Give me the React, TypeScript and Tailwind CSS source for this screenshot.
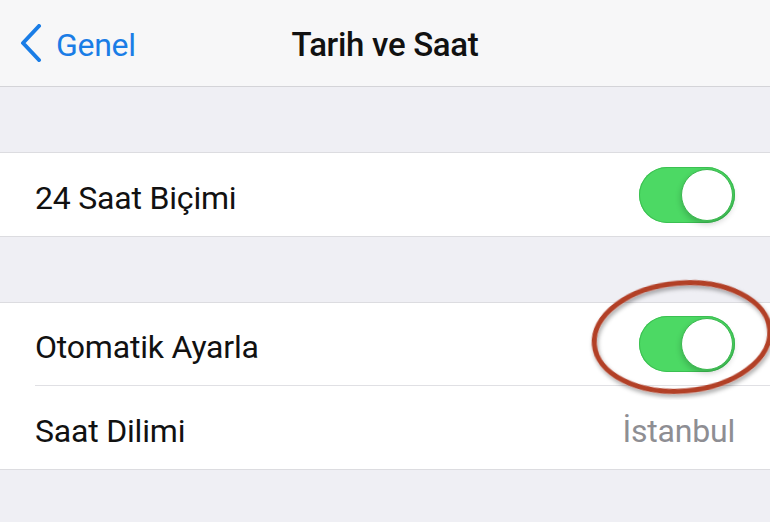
import React from 'react'

function Toggle() {
  return (
    <div className="flex h-[56px] w-[96px] items-center justify-end rounded-full bg-[#4cd964] p-[2px] shadow-[inset_0_0_0_1px_#3cc052]">
      <div className="h-[52px] w-[52px] rounded-full border border-[#3bb84f] bg-white shadow-[0_3px_6px_rgba(0,0,0,0.2)]" />
    </div>
  )
}

function Row({ label, right, divider }: { label: string; right: React.ReactNode; divider?: boolean }) {
  return (
    <div className="bg-white pl-[35px]">
      <div className={`flex h-[83px] items-center justify-between pr-[35px] ${divider ? 'border-b border-[#e0e0e4]' : ''}`}>
        <span className="pt-[6px] text-[32px] tracking-[-0.2px] text-[#111]">{label}</span>
        {right}
      </div>
    </div>
  )
}

export default function App() {
  return (
    <div className="relative h-[522px] w-[770px] overflow-hidden bg-[#efeff4] font-['Roboto',sans-serif]">
      {/* nav bar */}
      <div className="relative flex h-[87px] items-center justify-center border-b border-[#d4d4d8] bg-[#f7f7f8]">
        <div className="absolute left-[20px] flex items-center gap-[14px] text-[#1a7de6]">
          <svg width="22" height="38" viewBox="0 0 22 38">
            <path d="M19 2 L3 19 L19 36" fill="none" stroke="currentColor" strokeWidth="4" strokeLinecap="round" strokeLinejoin="round" />
          </svg>
          <span className="pt-[3px] text-[32px] tracking-[-0.3px]">Genel</span>
        </div>
        <span className="pt-[4px] text-[33px] font-medium tracking-[-0.3px] text-[#111]">Tarih ve Saat</span>
      </div>

      <div className="h-[65px]" />
      <div className="border-y border-[#dcdce0]">
        <Row label="24 Saat Biçimi" right={<Toggle />} />
      </div>

      <div className="h-[65px]" />
      <div className="border-y border-[#dcdce0]">
        <Row label="Otomatik Ayarla" right={<Toggle />} divider />
        <Row label="Saat Dilimi" right={<span className="pt-[6px] text-[32px] tracking-[-0.2px] text-[#8e8e93]">İstanbul</span>} />
      </div>

      {/* red annotation ellipse */}
      <svg className="absolute left-[585px] top-[275px]" width="190" height="125" viewBox="0 0 190 125">
        <defs>
          <filter id="sh" x="-20%" y="-20%" width="140%" height="140%">
            <feDropShadow dx="1" dy="3" stdDeviation="2" floodColor="#000" floodOpacity="0.35" />
          </filter>
        </defs>
        <ellipse cx="97" cy="62" rx="88" ry="54" transform="rotate(-5 97 62)" fill="none" stroke="#b23f28" strokeWidth="5" filter="url(#sh)" />
      </svg>
    </div>
  )
}
